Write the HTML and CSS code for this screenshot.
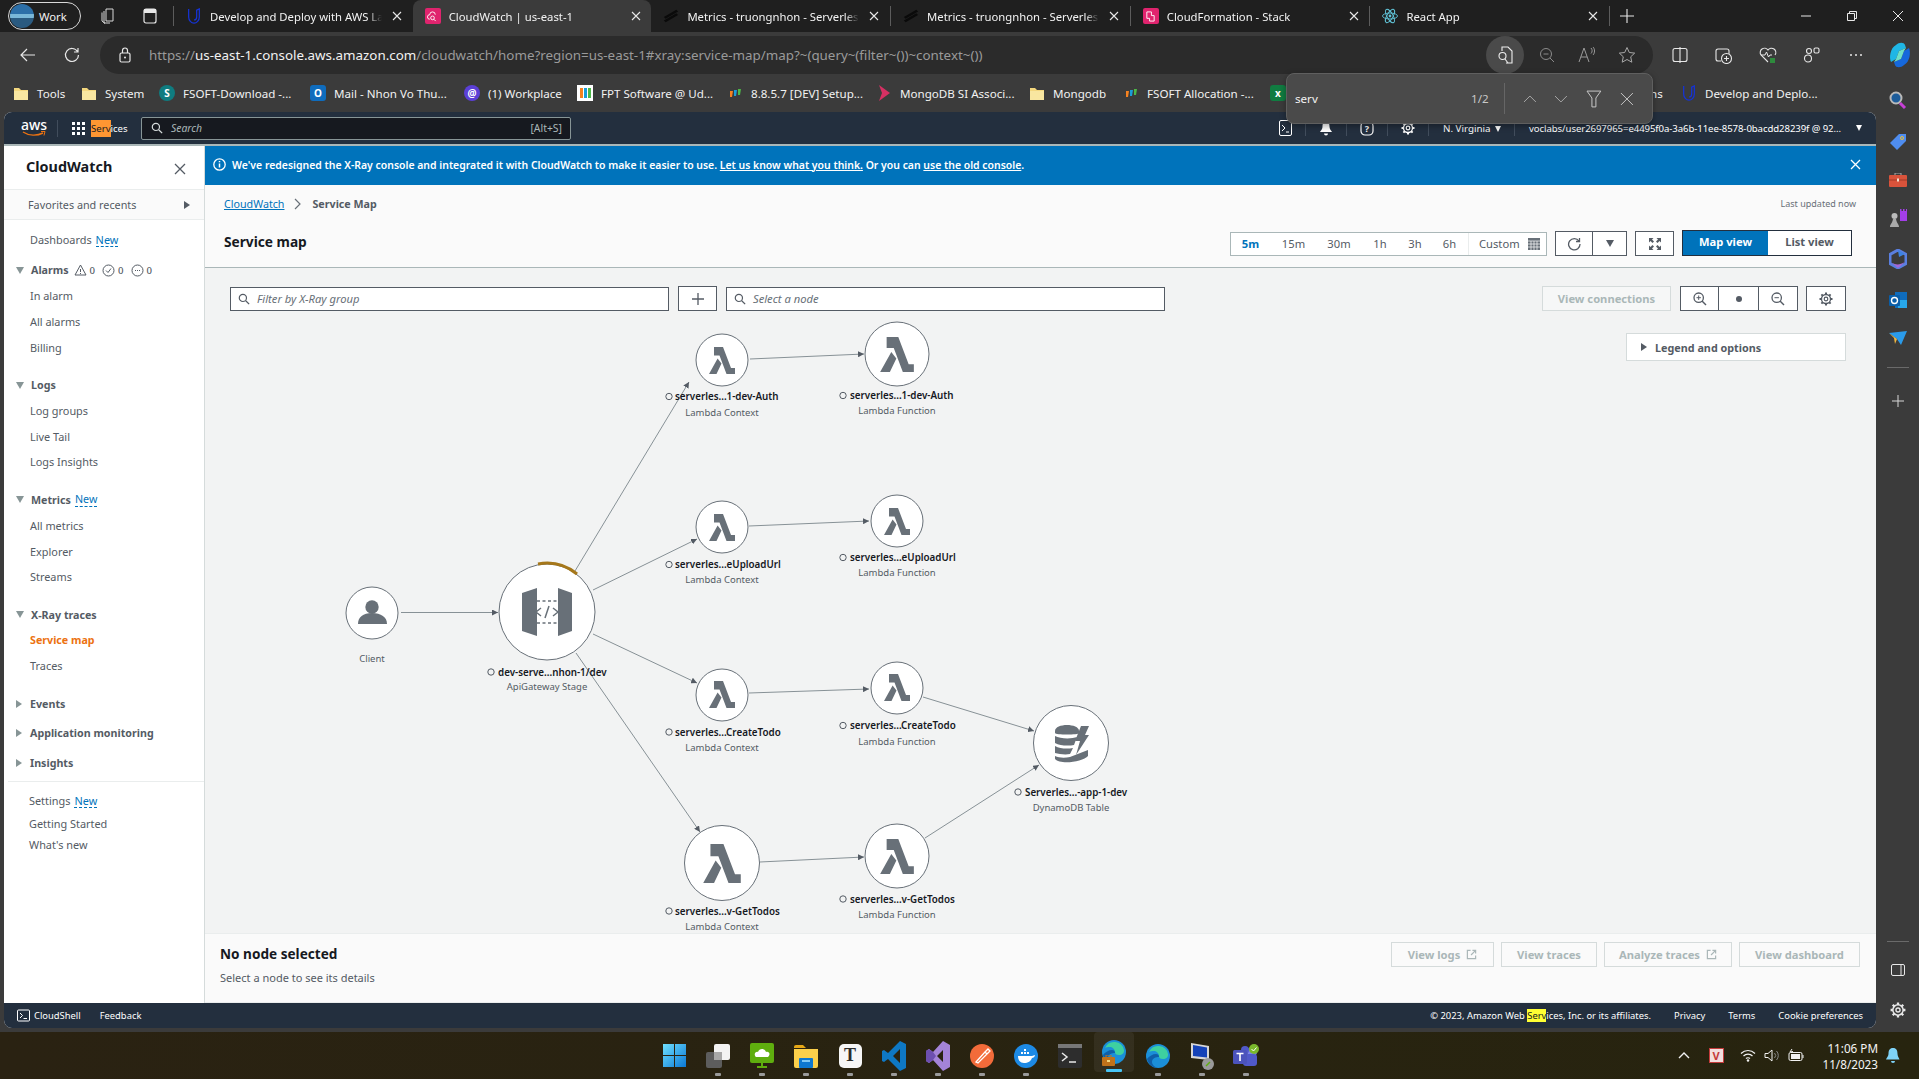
FILE: index.html
```html
<!DOCTYPE html>
<html lang="en">
<head>
<meta charset="utf-8">
<title>CloudWatch | us-east-1</title>
<link rel="stylesheet" href="styles.css">
</head>
<body>
<svg class="defs" width="0" height="0" aria-hidden="true">
  <defs>
    <symbol id="i-x" viewBox="0 0 10 10"><path d="M1 1l8 8M9 1l-8 8" fill="none" stroke="currentColor" stroke-width="1.1"/></symbol>
    <symbol id="i-udacity" viewBox="0 0 16 18"><path d="M2 1v9c0 4 3 7 6 7s6-3 6-7V1l-3 1.5V10c0 2-1 3.5-3 3.5" fill="none" stroke="#1533d6" stroke-width="1.4"/></symbol>
    <symbol id="i-dark" viewBox="0 0 18 16"><path d="M1 9L15 1l2 2L3 11zM1 13L15 5l2 2L3 15z" fill="#0a0a0a"/></symbol>
    <symbol id="i-search" viewBox="0 0 14 14"><circle cx="5.7" cy="5.7" r="4.2" fill="none" stroke="currentColor" stroke-width="1.4"/><path d="M9 9l4 4" stroke="currentColor" stroke-width="1.5"/></symbol>
    <symbol id="i-folder" viewBox="0 0 16 16"><path d="M1 3h5l2 2h7v10H1z" fill="#f3d77e"/><path d="M1 6h14v9H1z" fill="#f8e6a0"/></symbol>
    <symbol id="i-ext" viewBox="0 0 12 12"><path d="M5 1.5H1.5v9h9V7M7 1.5h3.5V5M10.5 1.5L5.5 6.5" fill="none" stroke="currentColor" stroke-width="1.3"/></symbol>
    <symbol id="i-gear" viewBox="0 0 14 14"><path d="M7 .5v13M.5 7h13M2.400 2.400l9.200 9.200M11.600 2.400l-9.200 9.200" stroke="currentColor" stroke-width="2"/><circle cx="7" cy="7" r="4.500" fill="var(--gear-bg)" stroke="currentColor" stroke-width="1.300"/><circle cx="7" cy="7" r="1.800" fill="none" stroke="currentColor" stroke-width="1.200"/></symbol>
    <symbol id="i-lambda" viewBox="0 0 26 27"><path d="M5 0h9l8 21h4v6h-8.5L10.5 8.5H5zM8.6 11.5L0 27h7.5l5-10.5z" fill="#687078"/></symbol>
    <symbol id="i-edge" viewBox="0 0 24 24"><circle cx="12" cy="12" r="12" fill="#1b8fd8"/><path d="M3 8a10 10 0 0 1 19 2c.5 3-2 5-5 5s-4-1-4-3c0-3-3-5-5-5S4 7 3 8z" fill="#3ed0a0"/><path d="M13 13c-3 0-7 1-7 5 0 2 2 5 6 6-5 0-10-4-11-9 2-3 6-5 9-5 2 0 3 1 3 3z" fill="#0f5fa8"/></symbol>
    <marker id="arrow" viewBox="0 0 6 6" refX="6" refY="3" markerWidth="6" markerHeight="6" markerUnits="userSpaceOnUse" orient="auto"><path d="M0 0L6 3L0 6z" fill="#545b64"/></marker>
  </defs>
</svg>

<div class="screen">
  <header class="tabstrip">
    <div class="profile"><span class="avatar"></span><span>Work</span></div>
    <span class="strip-icon"><svg width="16" height="16" viewBox="0 0 16 16"><path d="M6 1h7v12H6zM4 3v12h6M2 4.5V13l3 2.5" fill="none" stroke="#d8d8d8"/></svg></span>
    <span class="strip-icon"><svg width="14" height="16" viewBox="0 0 14 16"><rect x="1" y="1" width="12" height="14" rx="2" fill="none" stroke="#e8e8e8" stroke-width="1.2"/><path d="M1 1h12v4H1z" fill="#e8e8e8"/></svg></span>
    <span class="tab-sep first"></span>
    <div class="tab"><svg class="favicon" viewBox="0 0 16 18"><use href="#i-udacity"/></svg><span class="tab-title">Develop and Deploy with AWS La</span><svg class="tab-x"><use href="#i-x"/></svg></div>
    <div class="tab active"><span class="favicon pink"><svg width="11" height="11" viewBox="0 0 12 12"><path d="M3 9a2.5 2.5 0 0 1 0-5 3 3 0 0 1 6 0M6 5.500a2 2 0 1 1 0 4 2 2 0 0 1 0-4zM7.500 9l2 2" fill="none" stroke="#fff"/></svg></span><span class="tab-title">CloudWatch | us-east-1</span><svg class="tab-x"><use href="#i-x"/></svg></div>
    <div class="tab"><svg class="favicon" viewBox="0 0 18 16"><use href="#i-dark"/></svg><span class="tab-title">Metrics - truongnhon - Serverles</span><svg class="tab-x"><use href="#i-x"/></svg></div>
    <span class="tab-sep"></span>
    <div class="tab"><svg class="favicon" viewBox="0 0 18 16"><use href="#i-dark"/></svg><span class="tab-title">Metrics - truongnhon - Serverles</span><svg class="tab-x"><use href="#i-x"/></svg></div>
    <span class="tab-sep"></span>
    <div class="tab"><span class="favicon pink"><svg width="11" height="11" viewBox="0 0 12 12"><path d="M2 1h5v4h3v6H5V8H2z" fill="none" stroke="#fff"/></svg></span><span class="tab-title">CloudFormation - Stack</span><svg class="tab-x"><use href="#i-x"/></svg></div>
    <span class="tab-sep"></span>
    <div class="tab"><svg class="favicon" viewBox="0 0 16 16"><g fill="none" stroke="#61c4d8" stroke-width=".9"><ellipse cx="8" cy="8" rx="7.500" ry="3"/><ellipse cx="8" cy="8" rx="7.500" ry="3" transform="rotate(60 8 8)"/><ellipse cx="8" cy="8" rx="7.500" ry="3" transform="rotate(120 8 8)"/></g><circle cx="8" cy="8" r="1.400" fill="#61c4d8"/></svg><span class="tab-title">React App</span><svg class="tab-x"><use href="#i-x"/></svg></div>
    <span class="tab-sep"></span>
    <svg class="new-tab" viewBox="0 0 14 14"><path d="M7 0v14M0 7h14" stroke="#e8e8e8" stroke-width="1.100"/></svg>
    <div class="win-controls">
      <svg viewBox="0 0 10 10"><path d="M0 5h10" stroke="#e8e8e8"/></svg>
      <svg viewBox="0 0 10 10"><path d="M.5 2.500h7v7h-7zM2.500 2.500V.5h7v7H7.500" fill="none" stroke="#e8e8e8"/></svg>
      <svg viewBox="0 0 10 10"><path d="M0 0l10 10M10 0L0 10" stroke="#e8e8e8"/></svg>
    </div>
  </header>

  <div class="toolbar">
    <span class="tool"><svg width="16" height="14" viewBox="0 0 16 14"><path d="M15 7H1M7 1L1 7l6 6" fill="none" stroke="#e8e8e8" stroke-width="1.200"/></svg></span>
    <span class="tool"><svg width="16" height="16" viewBox="0 0 16 16"><path d="M13.500 4.500A6.500 6.500 0 1 0 14.500 8M14 1v4h-4" fill="none" stroke="#e8e8e8" stroke-width="1.200"/></svg></span>
    <div class="address">
      <svg class="lock" width="12" height="16" viewBox="0 0 12 16"><rect x="1" y="6" width="10" height="9" rx="1.500" fill="none" stroke="#e8e8e8" stroke-width="1.200"/><path d="M3.500 6V3.500a2.500 2.500 0 0 1 5 0V6" fill="none" stroke="#e8e8e8" stroke-width="1.200"/><circle cx="6" cy="10.500" r="1" fill="#e8e8e8"/></svg>
      <span class="url"><span class="url-dim">https://</span>us-east-1.console.aws.amazon.com<span class="url-dim">/cloudwatch/home?region=us-east-1#xray:service-map/map?~(query~(filter~())~context~())</span></span>
      <div class="address-end">
        <span class="addr-btn on"><svg width="16" height="18" viewBox="0 0 16 18"><path d="M5 5V1h6l4 4v12H9" fill="none" stroke="#eee" stroke-width="1.100"/><circle cx="5.500" cy="10" r="3.500" fill="none" stroke="#eee" stroke-width="1.100"/><path d="M8 13l3 4" stroke="#eee" stroke-width="1.100"/></svg></span>
        <span class="addr-btn"><svg width="16" height="16" viewBox="0 0 16 16"><circle cx="7" cy="7" r="5.500" fill="none" stroke="#8b8b8b"/><path d="M4.500 7h5M11 11l4 4" stroke="#8b8b8b"/></svg></span>
        <span class="addr-btn"><svg width="18" height="16" viewBox="0 0 18 16"><path d="M1 15L6 1l5 14M3 10h6M13 1c1.500 1.500 1.500 4 0 5.500M15 0c2 2 2 6 0 8" fill="none" stroke="#9a9a9a"/></svg></span>
        <span class="addr-btn"><svg width="18" height="18" viewBox="0 0 18 18"><path d="M9 1.500l2.300 5 5.400.6-4 3.700 1.100 5.400L9 13.500l-4.800 2.700 1.100-5.400-4-3.700 5.400-.6z" fill="none" stroke="#a8a8a8"/></svg></span>
      </div>
    </div>
    <span class="tool first-end"><svg width="16" height="16" viewBox="0 0 16 16"><rect x="1" y="1.500" width="14" height="13" rx="2" fill="none" stroke="#e8e8e8" stroke-width="1.100"/><path d="M8 0v16" stroke="#e8e8e8" stroke-width="1.100"/></svg></span>
    <span class="tool"><svg width="18" height="18" viewBox="0 0 18 18"><path d="M3 3h9a2 2 0 0 1 2 2v3M3 3a2 2 0 0 0-2 2v8a2 2 0 0 0 2 2h3" fill="none" stroke="#e8e8e8" stroke-width="1.100"/><circle cx="11.500" cy="12.500" r="5" fill="none" stroke="#e8e8e8" stroke-width="1.100"/><path d="M11.500 10v5M9 12.500h5" stroke="#e8e8e8" stroke-width="1.100"/></svg></span>
    <span class="tool"><svg width="18" height="18" viewBox="0 0 18 18"><path d="M9 16L2 9a4 4 0 0 1 7-5 4 4 0 0 1 7 5" fill="none" stroke="#e8e8e8" stroke-width="1.100"/><path d="M2 9h4l1.500-3 2 5 1.500-2h2" fill="none" stroke="#e8e8e8"/><rect x="11" y="12" width="5" height="5" fill="#2e8b3d"/></svg></span>
    <span class="tool"><svg width="18" height="18" viewBox="0 0 18 18"><circle cx="5" cy="12.500" r="3.500" fill="none" stroke="#e8e8e8" stroke-width="1.100"/><circle cx="6" cy="5" r="2.500" fill="none" stroke="#e8e8e8" stroke-width="1.100"/><rect x="11" y="2" width="5" height="5" rx="1.500" fill="none" stroke="#e8e8e8" stroke-width="1.100"/></svg></span>
    <span class="tool"><svg width="14" height="4" viewBox="0 0 14 4"><circle cx="2" cy="2" r="1" fill="#e8e8e8"/><circle cx="7" cy="2" r="1" fill="#e8e8e8"/><circle cx="12" cy="2" r="1" fill="#e8e8e8"/></svg></span>
    <span class="tool"><svg width="24" height="26" viewBox="0 0 24 26"><path d="M8 3c3-3 8-3 9 0l1 3-7 3-3 8-5 3C1 16 2 6 8 3z" fill="#1fb6e6"/><path d="M16 23c-3 3-8 3-9 0l-1-3 7-3 3-8 5-3c2 4 1 14-5 17z" fill="#1668dc"/><path d="M11 9l7-3-2 3-3 8-7 3 2-3z" fill="#6fe0c8"/></svg></span>
  </div>

  <nav class="bookmarks">
    <a class="bm"><svg class="bm-icon"><use href="#i-folder"/></svg>Tools</a>
    <a class="bm"><svg class="bm-icon"><use href="#i-folder"/></svg>System</a>
    <a class="bm"><span class="bm-icon letter teal">S</span>FSOFT-Download -...</a>
    <a class="bm"><span class="bm-icon letter blue">O</span>Mail - Nhon Vo Thu...</a>
    <a class="bm"><span class="bm-icon letter violet">@</span>(1) Workplace</a>
    <a class="bm"><svg class="bm-icon" viewBox="0 0 16 16"><rect width="16" height="16" fill="#fff"/><path d="M3 3h3v10H3z" fill="#f58220"/><path d="M7 3h3v10H7z" fill="#1a9dd9"/><path d="M11 3h3v10h-3z" fill="#4db848"/></svg>FPT Software @ Ud...</a>
    <a class="bm"><svg class="bm-icon" viewBox="0 0 16 16"><path d="M3 6h3l-1 6H3z" fill="#f58220"/><path d="M7 5h3l-1 6H7z" fill="#1a9dd9"/><path d="M11 4h3l-1 6h-2z" fill="#4db848"/></svg>8.8.5.7 [DEV] Setup...</a>
    <a class="bm"><svg class="bm-icon" viewBox="0 0 16 16"><path d="M3 0l11 8-11 8 3-8z" fill="#d63063"/></svg>MongoDB SI Associ...</a>
    <a class="bm"><svg class="bm-icon"><use href="#i-folder"/></svg>Mongodb</a>
    <a class="bm"><svg class="bm-icon" viewBox="0 0 16 16"><path d="M3 6h3l-1 6H3z" fill="#f58220"/><path d="M7 5h3l-1 6H7z" fill="#1a9dd9"/><path d="M11 4h3l-1 6h-2z" fill="#4db848"/></svg>FSOFT Allocation -...</a>
    <a class="bm"><span class="bm-icon letter green">x</span></a>
    <a class="bm">ns</a>
    <a class="bm"><svg class="bm-icon" viewBox="0 0 16 18"><use href="#i-udacity"/></svg>Develop and Deplo...</a>
  </nav>

  <div class="find">
    <span class="find-text">serv</span>
    <span class="find-count">1/2</span>
    <span class="find-sep"></span>
    <svg width="14" height="8" viewBox="0 0 14 8"><path d="M1 7l6-6 6 6" fill="none" stroke="#a8a8a8"/></svg>
    <svg width="14" height="8" viewBox="0 0 14 8"><path d="M1 1l6 6 6-6" fill="none" stroke="#a8a8a8"/></svg>
    <svg width="16" height="18" viewBox="0 0 16 18"><path d="M1 1h14L10 8v9H6V8z" fill="none" stroke="#c8c8c8"/></svg>
    <svg width="14" height="14" viewBox="0 0 14 14"><path d="M1 1l12 12M13 1L1 13" stroke="#c8c8c8"/></svg>
  </div>

  <div class="workspace">
    <div class="console">
      <div class="topnav">
        <div class="aws-logo"><span>aws</span><svg width="24" height="6" viewBox="0 0 24 6"><path d="M1 1c6 4 14 4 20 1" fill="none" stroke="#ec7211" stroke-width="1.400"/><path d="M19 .5h4l-1 4" fill="none" stroke="#ec7211"/></svg></div>
        <span class="nav-rule"></span>
        <svg class="grid-icon" width="13" height="13" viewBox="0 0 13 13"><g fill="#fff"><rect width="3" height="3"/><rect x="5" width="3" height="3"/><rect x="10" width="3" height="3"/><rect y="5" width="3" height="3"/><rect x="5" y="5" width="3" height="3"/><rect x="10" y="5" width="3" height="3"/><rect y="10" width="3" height="3"/><rect x="5" y="10" width="3" height="3"/><rect x="10" y="10" width="3" height="3"/></g></svg>
        <span class="services"><mark class="hit-current">Serv</mark>ices</span>
        <div class="global-search"><svg class="search-glass" width="12" height="12"><use href="#i-search"/></svg><span class="search-ph">Search</span><span class="search-key">[Alt+S]</span></div>
        <div class="topnav-right">
          <span class="top-ico"><svg width="13" height="16" viewBox="0 0 13 16"><rect x=".5" y=".5" width="12" height="15" rx="1.500" fill="none" stroke="#fff"/><path d="M3 5l3 3-3 3M7 12h3" fill="none" stroke="#fff"/></svg></span>
          <span class="top-ico"><svg width="14" height="15" viewBox="0 0 14 15"><path d="M7 1c3 0 3.500 2 3.500 5 0 2 2 4 2.500 5H1c.5-1 2.500-3 2.500-5C3.500 3 4 1 7 1zM5 12.500a2 2 0 0 0 4 0" fill="#fff"/></svg></span>
          <span class="top-ico"><svg width="14" height="15" viewBox="0 0 14 15"><rect x="1" y="1" width="12" height="13" rx="4" fill="none" stroke="#fff" stroke-width="1.200"/><text x="7" y="11" class="q-mark">?</text></svg></span>
          <span class="top-ico dark-gear"><svg width="14" height="14"><use href="#i-gear"/></svg></span>
          <span class="region">N. Virginia <i class="caret"></i></span>
          <span class="account">voclabs/user2697965=e4495f0a-3a6b-11ee-8578-0bacdd28239f @ 92...</span>
          <i class="caret end"></i>
        </div>
      </div>

      <div class="console-body">
        <aside class="sidenav">
          <div class="side-head"><h2>CloudWatch</h2><svg class="side-x" width="12" height="12" viewBox="0 0 12 12"><path d="M1 1l10 10M11 1L1 11" stroke="#545b64" stroke-width="1.300"/></svg></div>
          <div class="favorites"><span>Favorites and recents</span><i class="tri-right dark"></i></div>
          <ul class="side-list">
            <li class="item first">Dashboards <span class="new">New</span></li>
            <li class="head alarms"><i class="tri-down"></i>Alarms
              <span class="alarm-badges">
                <svg width="13" height="12" viewBox="0 0 13 12"><path d="M6.500 1L12 11H1z" fill="none" stroke="#545b64"/><path d="M6.500 5v3M6.500 9v1" stroke="#545b64"/></svg><b>0</b>
                <svg width="13" height="13" viewBox="0 0 13 13"><circle cx="6.500" cy="6.500" r="5.500" fill="none" stroke="#545b64"/><path d="M4 6.500l2 2 3-4" fill="none" stroke="#545b64"/></svg><b>0</b>
                <svg width="13" height="13" viewBox="0 0 13 13"><circle cx="6.500" cy="6.500" r="5.500" fill="none" stroke="#545b64"/><path d="M4 6.500h1M6 6.500h1M8 6.500h1" stroke="#545b64"/></svg><b>0</b>
              </span></li>
            <li class="item">In alarm</li>
            <li class="item">All alarms</li>
            <li class="item">Billing</li>
            <li class="head group"><i class="tri-down"></i>Logs</li>
            <li class="item">Log groups</li>
            <li class="item">Live Tail</li>
            <li class="item">Logs Insights</li>
            <li class="head group"><i class="tri-down"></i>Metrics <span class="new">New</span></li>
            <li class="item">All metrics</li>
            <li class="item">Explorer</li>
            <li class="item">Streams</li>
            <li class="head group"><i class="tri-down"></i>X-Ray traces</li>
            <li class="item current">Service map</li>
            <li class="item">Traces</li>
            <li class="head group"><i class="tri-right"></i>Events</li>
            <li class="head tight"><i class="tri-right"></i>Application monitoring</li>
            <li class="head tight"><i class="tri-right"></i>Insights</li>
          </ul>
          <ul class="side-foot">
            <li>Settings <span class="new">New</span></li>
            <li>Getting Started</li>
            <li>What's new</li>
          </ul>
        </aside>

        <main class="main">
          <div class="banner">
            <svg class="banner-icon" width="13" height="13" viewBox="0 0 13 13"><circle cx="6.500" cy="6.500" r="5.700" fill="none" stroke="#fff" stroke-width="1.300"/><path d="M6.500 5.500v4M6.500 3v1.300" stroke="#fff" stroke-width="1.500"/></svg>
            <p>We've redesigned the X-Ray console and integrated it with CloudWatch to make it easier to use. <a>Let us know what you think.</a> Or you can <a>use the old console</a>.</p>
            <svg class="banner-x" width="11" height="11" viewBox="0 0 11 11"><path d="M1 1l9 9M10 1l-9 9" stroke="#fff" stroke-width="1.300"/></svg>
          </div>

          <div class="page-head">
            <div class="crumbs">
              <a>CloudWatch</a>
              <svg width="8" height="12" viewBox="0 0 8 12"><path d="M1 1l5 5-5 5" fill="none" stroke="#687078" stroke-width="1.200"/></svg>
              <b>Service Map</b>
              <span class="updated">Last updated now</span>
            </div>
            <div class="title-row">
              <h1>Service map</h1>
              <div class="range">
                <span class="range-opt on">5m</span><span class="range-opt w15">15m</span><span class="range-opt w30">30m</span><span class="range-opt w1">1h</span><span class="range-opt w3">3h</span><span class="range-opt w6">6h</span>
                <span class="range-custom">Custom<svg width="12" height="12" viewBox="0 0 12 12"><rect width="12" height="12" fill="#687078"/><path d="M0 3h12M0 6h12M0 9h12M3 3v9M6 3v9M9 3v9" stroke="#fff" stroke-width=".7"/></svg></span>
              </div>
              <div class="btn-group">
                <span class="sq w38"><svg width="14" height="14" viewBox="0 0 14 14"><path d="M12 4a5.700 5.700 0 1 0 1 3M12.500 1v3.500H9" fill="none" stroke="#545b64" stroke-width="1.300"/></svg></span>
                <span class="sq w34"><i class="tri-down dark"></i></span>
              </div>
              <span class="sq single w39"><svg width="12" height="12" viewBox="0 0 12 12"><path d="M0 0h4.500L3 1.500 5 3.500 3.500 5l-2-2L0 4.500zM12 0v4.500L10.500 3l-2 2L7 3.500l2-2L7.500 0zM0 12V7.500L1.500 9l2-2L5 8.500l-2 2L4.500 12zM12 12H7.500L9 10.500l-2-2L8.500 7l2 2L12 7.500z" fill="#545b64"/></svg></span>
              <div class="view-switch"><span class="view-on">Map view</span><span class="view-off">List view</span></div>
            </div>
          </div>

          <section class="map">
            <svg class="map-canvas" viewBox="205 268 1671 665">
              <g class="edges">
                <path d="M401 612.500H498"/><path d="M575 571L689 382"/><path d="M593 590L697 539"/><path d="M593 634L697 683"/><path d="M576 653L700 832"/>
                <path d="M750 359L864 354"/><path d="M749 526L869 521"/><path d="M749 693L869 689"/><path d="M760 862L864 857"/>
                <path d="M923 697L1034 731"/><path d="M925 838L1039 765"/>
              </g>
              <g class="nodes">
                <circle cx="372" cy="613" r="26"/><circle cx="547" cy="612" r="48"/>
                <circle cx="722" cy="360" r="26"/><circle cx="897" cy="354" r="32"/>
                <circle cx="722" cy="527" r="26"/><circle cx="897" cy="521" r="26"/>
                <circle cx="722" cy="695" r="26"/><circle cx="897" cy="688" r="26"/>
                <circle cx="722" cy="863" r="37.500"/><circle cx="897" cy="856" r="32"/>
                <circle cx="1071" cy="743" r="37.500"/>
              </g>
              <path class="health-arc" d="M538 564A48 48 0 0 1 577 574"/>

              <circle class="glyph-fill" cx="372" cy="607" r="6.700"/>
              <path class="glyph-fill" d="M358 624c0-7 5-11 14-11s15 4 15 11z"/>

              <path class="glyph-fill" d="M522 593l15-5v48l-15-5zM558 588l14 5v38l-14 5z"/>
              <path class="gw-dash" d="M537 601H558M537 623H558"/>
              <path class="gw-code" d="M541 608l-5 4 5 4M553 608l5 4-5 4M549 606l-4 12"/>

              <use href="#i-lambda" x="709" y="347" width="26" height="27"/>
              <use href="#i-lambda" x="880" y="337" width="34" height="35"/>
              <use href="#i-lambda" x="709" y="514" width="26" height="27"/>
              <use href="#i-lambda" x="884" y="508" width="26" height="27"/>
              <use href="#i-lambda" x="709" y="681" width="26" height="27"/>
              <use href="#i-lambda" x="884" y="674" width="26" height="27"/>
              <use href="#i-lambda" x="703" y="844" width="38" height="39"/>
              <use href="#i-lambda" x="880" y="839" width="34" height="35"/>

              <g class="ddb">
                <path class="glyph-fill" d="M1055 731c0-8 24-8 24-0v2c0 2-24 2-24 0z"/>
                <path class="glyph-fill" d="M1055 736c5 3 17 3 22 1l-3 8c-5 1-14 1-19-2z"/>
                <path class="glyph-fill" d="M1055 746c5 3 13 3 18 2l-3 6c-5 1-11 0-15-1z"/>
                <path class="glyph-fill" d="M1055 756c4 2 10 2 15 1l18-7v6c-5 6-28 9-33 3z"/>
                <path class="glyph-fill" d="M1081 726h8l-4 9h4l-13 20 4-14h-5z"/>
              </g>

              <g class="labels">
                <text class="type" x="372" y="662">Client</text>

                <circle class="status" cx="491" cy="672" r="3.200"/><text class="name" x="498" y="675.500">dev-serve...nhon-1/dev</text><text class="type" x="547" y="690">ApiGateway Stage</text>

                <circle class="status" cx="669" cy="396.500" r="3.200"/><text class="name" x="675" y="400">serverles...1-dev-Auth</text><text class="type" x="722" y="416">Lambda Context</text>
                <circle class="status" cx="843" cy="395.500" r="3.200"/><text class="name" x="850" y="399">serverles...1-dev-Auth</text><text class="type" x="897" y="414">Lambda Function</text>

                <circle class="status" cx="669" cy="564.500" r="3.200"/><text class="name" x="675" y="568">serverles...eUploadUrl</text><text class="type" x="722" y="583">Lambda Context</text>
                <circle class="status" cx="843" cy="557.500" r="3.200"/><text class="name" x="850" y="561">serverles...eUploadUrl</text><text class="type" x="897" y="576">Lambda Function</text>

                <circle class="status" cx="669" cy="732" r="3.200"/><text class="name" x="675" y="735.500">serverles...CreateTodo</text><text class="type" x="722" y="751">Lambda Context</text>
                <circle class="status" cx="843" cy="725.500" r="3.200"/><text class="name" x="850" y="729">serverles...CreateTodo</text><text class="type" x="897" y="744.500">Lambda Function</text>

                <circle class="status" cx="669" cy="911" r="3.200"/><text class="name" x="675" y="914.500">serverles...v-GetTodos</text><text class="type" x="722" y="930">Lambda Context</text>
                <circle class="status" cx="843" cy="899" r="3.200"/><text class="name" x="850" y="902.500">serverles...v-GetTodos</text><text class="type" x="897" y="918">Lambda Function</text>

                <circle class="status" cx="1018" cy="792" r="3.200"/><text class="name" x="1025" y="795.500">Serverles...-app-1-dev</text><text class="type" x="1071" y="811">DynamoDB Table</text>
              </g>
            </svg>

            <div class="map-tools">
              <div class="field"><svg width="12" height="12"><use href="#i-search"/></svg><span>Filter by X-Ray group</span></div>
              <span class="sq single plus"><svg width="12" height="12" viewBox="0 0 12 12"><path d="M6 0v12M0 6h12" stroke="#545b64" stroke-width="1.300"/></svg></span>
              <div class="field"><svg width="12" height="12"><use href="#i-search"/></svg><span>Select a node</span></div>
              <span class="ghost-btn conn">View connections</span>
              <div class="btn-group zoomers">
                <span class="sq"><svg width="14" height="14" viewBox="0 0 14 14"><circle cx="5.700" cy="5.700" r="4.700" fill="none" stroke="#545b64" stroke-width="1.300"/><path d="M9 9l4 4" stroke="#545b64" stroke-width="1.500"/><path d="M5.700 3.500v4.400M3.500 5.700h4.400" stroke="#545b64"/></svg></span>
                <span class="sq"><i class="dot"></i></span>
                <span class="sq"><svg width="14" height="14" viewBox="0 0 14 14"><circle cx="5.700" cy="5.700" r="4.700" fill="none" stroke="#545b64" stroke-width="1.300"/><path d="M9 9l4 4" stroke="#545b64" stroke-width="1.500"/><path d="M3.500 5.700h4.400" stroke="#545b64"/></svg></span>
              </div>
              <span class="sq single gear"><svg width="14" height="14"><use href="#i-gear"/></svg></span>
            </div>
            <div class="legend"><i class="tri-right dark"></i>Legend and options</div>
          </section>

          <div class="details">
            <div class="details-text"><h3>No node selected</h3><p>Select a node to see its details</p></div>
            <div class="details-actions">
              <span class="ghost-btn">View logs<svg width="11" height="11"><use href="#i-ext"/></svg></span>
              <span class="ghost-btn">View traces</span>
              <span class="ghost-btn">Analyze traces<svg width="11" height="11"><use href="#i-ext"/></svg></span>
              <span class="ghost-btn">View dashboard</span>
            </div>
          </div>
        </main>
      </div>

      <footer class="console-foot">
        <svg width="13" height="13" viewBox="0 0 13 13"><rect x=".5" y="1" width="12" height="11" rx="1" fill="none" stroke="#fff"/><path d="M3 4l2.500 2.500L3 9M6.500 9.500h3.500" fill="none" stroke="#fff"/></svg>
        <span class="cs">CloudShell</span>
        <span>Feedback</span>
        <div class="foot-right">
          <span class="copy">© 2023, Amazon Web <mark class="hit">Serv</mark>ices, Inc. or its affiliates.</span>
          <span>Privacy</span>
          <span>Terms</span>
          <span>Cookie preferences</span>
        </div>
      </footer>
    </div>

    <aside class="edgebar">
      <svg width="18" height="20" viewBox="0 0 18 20"><circle cx="7" cy="7" r="5.500" fill="#1d5c9a" stroke="#b9b9b9" stroke-width="2"/><path d="M11 12l5 5" stroke="#c73fd6" stroke-width="3"/></svg>
      <svg width="18" height="18" viewBox="0 0 18 18"><path d="M1 10L10 1h7v7l-9 9z" fill="#4f8df0"/><circle cx="13" cy="5" r="1.500" fill="none" stroke="#f2c230"/></svg>
      <svg width="18" height="14" viewBox="0 0 18 14"><path d="M6 2V0h6v2" fill="none" stroke="#aaa"/><rect y="2" width="18" height="12" rx="1" fill="#d9533b"/><path d="M0 7h18" stroke="#a13a28"/><rect x="8" y="5.500" width="2" height="3" fill="#f2e2d0"/></svg>
      <svg width="18" height="18" viewBox="0 0 18 18"><path d="M11 0h1.500v2H14V0h1.500v2H17V0h1v12h-7z" fill="#a23ee8"/><circle cx="5.500" cy="7" r="3" fill="#bbb"/><path d="M3 18h-2c0-3 2-3 3-8h3c1 5 3 5 3 8z" fill="#aaa"/></svg>
      <svg width="18" height="20" viewBox="0 0 18 20"><path d="M9 1l8 4.500v9L9 19l-8-4.500v-9z" fill="none" stroke="#5a7fe0" stroke-width="3"/><path d="M3 14c4 2 8 2 13-1l-7 6z" fill="#a468d8"/><path d="M9 1l7 4-6 3z" fill="#3e82e0"/></svg>
      <svg width="18" height="18" viewBox="0 0 18 18"><rect x="6" y="1" width="12" height="16" fill="#0f6cbd"/><rect x="9" y="9" width="9" height="8" fill="#28a8ea"/><rect y="4" width="11" height="11" rx="1" fill="#0a5ea8"/><circle cx="5.500" cy="9.500" r="3" fill="none" stroke="#fff" stroke-width="1.400"/></svg>
      <svg width="18" height="14" viewBox="0 0 18 14"><path d="M0 2l18-2-6 14-4-6z" fill="#2a9bea"/><path d="M0 2l8 6-2 5-1-6z" fill="#f0b640"/></svg>
      <span class="edge-rule"></span>
      <svg width="12" height="12" viewBox="0 0 12 12"><path d="M6 0v12M0 6h12" stroke="#d8d8d8"/></svg>
      <span class="edge-rule low"></span>
      <svg class="edge-panel" width="14" height="12" viewBox="0 0 14 12"><rect x=".5" y=".5" width="13" height="11" rx="1.500" fill="none" stroke="#e8e8e8"/><path d="M10 .5v11" stroke="#e8e8e8"/></svg>
      <svg class="edge-gear" width="16" height="16"><use href="#i-gear"/></svg>
    </aside>
  </div>

  <footer class="taskbar">
    <div class="task-icons">
      <span class="task"><svg width="23" height="23" viewBox="0 0 23 23"><defs><linearGradient id="win" x1="0" y1="0" x2="1" y2="1"><stop offset="0" stop-color="#6fe0ff"/><stop offset="1" stop-color="#0a78d6"/></linearGradient></defs><path d="M0 0h11v11H0zM12 0h11v11H12zM0 12h11v11H0zM12 12h11v11H12z" fill="url(#win)"/></svg></span>
      <span class="task"><svg width="24" height="24" viewBox="0 0 24 24"><rect y="8" width="16" height="16" rx="2" fill="#5d5d5d"/><rect x="8" width="16" height="16" rx="2" fill="#f3f3f3"/><rect x="8" y="8" width="8" height="8" fill="#a8a8a8"/></svg><i class="pip"></i></span>
      <span class="task"><svg width="24" height="26" viewBox="0 0 24 26"><rect width="24" height="20" rx="2" fill="#5fae0e"/><path d="M6 14c-3-3 0-6 2-5 1-4 7-4 8 0 3-1 5 2 2 5z" fill="#fff"/><path d="M11 20h2v3h4v2H7v-2h4z" fill="#5fae0e"/></svg><i class="pip"></i></span>
      <span class="task"><svg width="24" height="24" viewBox="0 0 24 24"><path d="M0 3a2 2 0 0 1 2-2h7l3 3H0z" fill="#e6a817"/><path d="M0 5h24v17a2 2 0 0 1-2 2H2a2 2 0 0 1-2-2z" fill="#fcd04b"/><rect x="5" y="14" width="14" height="10" rx="1" fill="#0e78d0"/><rect x="8" y="16" width="8" height="2" fill="#7ec8f5"/></svg><i class="pip"></i></span>
      <span class="task"><span class="type-t">T</span><i class="pip"></i></span>
      <span class="task"><svg width="24" height="30" viewBox="0 0 24 30"><path d="M18 0l6 3v24l-6 3L6 18l-4 3-2-1v-10l2-1 4 3zM18 8l-7 7 7 7z" fill="#0e78c4"/></svg><i class="pip"></i></span>
      <span class="task"><svg width="24" height="30" viewBox="0 0 24 30"><path d="M17 0l7 4v22l-7 4L7 19l-4 3-3-2V10l3-2 4 3zM17 9l-6 6 6 6z" fill="#a484d8"/><path d="M0 10l3-2 4 3 3 4-3 4-4 3-3-2z" fill="#6d4fb0"/></svg><i class="pip"></i></span>
      <span class="task"><svg width="24" height="24" viewBox="0 0 24 24"><circle cx="12" cy="12" r="12" fill="#f26b3a"/><path d="M6 18l9-10 2 2-9 9zM15 8l3-3 2 2-3 3" fill="none" stroke="#fff" stroke-width="1.300"/></svg><i class="pip"></i></span>
      <span class="task"><svg width="24" height="24" viewBox="0 0 24 24"><circle cx="12" cy="12" r="12" fill="#1d8ae5"/><path d="M4 12h14c1 0 2-1 3-1 0 2-2 3-3 3-1 3-4 5-8 5-4 0-6-3-6-7z" fill="#fff"/><path d="M7 8h2v2H7zM10 8h2v2h-2zM13 8h2v2h-2zM10 5h2v2h-2z" fill="#fff"/></svg><i class="pip"></i></span>
      <span class="task"><svg width="24" height="24" viewBox="0 0 24 24"><rect width="24" height="24" rx="2" fill="#2d2d2d"/><rect width="24" height="4" fill="#777"/><path d="M4 9l5 4-5 4M11 18h7" fill="none" stroke="#e8e8e8" stroke-width="1.500"/></svg></span>
      <span class="task active"><svg width="24" height="24"><use href="#i-edge"/></svg><svg class="briefcase" width="13" height="11" viewBox="0 0 13 11"><rect y="2" width="13" height="9" rx="1" fill="#c0721a"/><path d="M4 2V0h5v2" fill="none" stroke="#c0721a"/><rect x="5" y="5" width="3" height="2" fill="#f3d77e"/></svg><i class="pip blue"></i></span>
      <span class="task"><svg width="24" height="24"><use href="#i-edge"/></svg><i class="pip"></i></span>
      <span class="task"><svg width="24" height="28" viewBox="0 0 24 28"><path d="M1 1l18 3v14L1 16z" fill="#d6d6d6"/><path d="M3 3l14 2.500v10L3 14z" fill="#1442b8"/><circle cx="18" cy="22" r="6" fill="#9a9a9a"/><path d="M16 24l4-4" stroke="#5fae0e" stroke-width="1.500"/></svg><i class="pip"></i></span>
      <span class="task"><svg width="26" height="24" viewBox="0 0 26 24"><circle cx="19" cy="8" r="5" fill="#7b83eb"/><circle cx="12" cy="6" r="4" fill="#5059c9"/><rect x="10" y="10" width="14" height="12" rx="3" fill="#5059c9"/><rect y="6" width="14" height="14" rx="1.500" fill="#4b53bc"/><path d="M3.500 9.500h7M7 9.500V17" stroke="#fff" stroke-width="1.600"/><circle cx="21" cy="5" r="5" fill="#7ab82c"/><path d="M18.500 5l2 2 3-3.500" fill="none" stroke="#fff"/></svg><i class="pip"></i></span>
    </div>
    <div class="tray">
      <svg width="12" height="7" viewBox="0 0 12 7"><path d="M1 6l5-5 5 5" fill="none" stroke="#f2f2f2" stroke-width="1.400"/></svg>
      <span class="tray-v">V</span>
      <svg width="16" height="13" viewBox="0 0 16 13"><path d="M1 4.500c4-4 10-4 14 0M3.500 7c2.500-2.500 6.500-2.500 9 0M6 9.500c1-1 3-1 4 0" fill="none" stroke="#f2f2f2" stroke-width="1.200"/><circle cx="8" cy="11.500" r="1.200" fill="#f2f2f2"/></svg>
      <svg width="16" height="13" viewBox="0 0 16 13"><path d="M1 4.500h3L8 1v11L4 8.500H1z" fill="none" stroke="#f2f2f2"/><path d="M10.500 4a3.500 3.500 0 0 1 0 5M12.500 2a6.500 6.500 0 0 1 0 9" fill="none" stroke="#888"/></svg>
      <svg width="17" height="13" viewBox="0 0 17 13"><rect x="1" y="3.500" width="13" height="8" rx="1.500" fill="none" stroke="#f2f2f2"/><rect x="3" y="5" width="9" height="5" fill="#f2f2f2"/><path d="M15 6v3" stroke="#f2f2f2"/><path d="M4 0l-2 3 3-.5" fill="none" stroke="#f2f2f2"/></svg>
      <div class="clock"><span>11:06 PM</span><span>11/8/2023</span></div>
      <svg class="tray-bell" width="14" height="15" viewBox="0 0 14 15"><path d="M7 0c3.500 0 4.500 2.500 4.500 6 0 2 1.500 4 2 5.500H0C.5 10 2.500 8 2.500 6 2.500 2.500 3.500 0 7 0zM5 13h4a2 2 0 0 1-4 0z" fill="#7fd3f7"/></svg>
    </div>
  </footer>
</div>
</body>
</html>
```

FILE: styles.css
```css
* { box-sizing: border-box; }
html, body { margin: 0; padding: 0; }
body { background: #3b3b3b; font-family: "Noto Sans", "Open Sans", sans-serif; overflow: hidden; }
.defs { position: absolute; }
h1, h2, h3, p, ul { margin: 0; padding: 0; }
ul { list-style: none; }
i { display: inline-block; font-style: normal; }
mark { color: #16191f; }

.screen { position: relative; width: 1919px; height: 1079px; display: flex; flex-direction: column; background: #3b3b3b; overflow: hidden; }

/* browser tab strip */
.tabstrip { height: 32px; flex: none; background: #1f1f1f; display: flex; align-items: center; color: #f2f2f2; font-size: 11.300px; }
.profile { width: 73px; height: 28px; margin-left: 8px; border: 1px solid #d8d8d8; border-radius: 14px; display: flex; align-items: center; gap: 5px; }
.avatar { width: 24px; height: 24px; margin-left: 1px; border-radius: 50%; background: linear-gradient(#2c6fa8 0 40%, #79b7d8 40% 60%, #2a5a80 60%); }
.strip-icon { width: 26px; display: flex; justify-content: center; margin-left: 0; }
.profile + .strip-icon { margin-left: 14px; }
.strip-icon + .strip-icon { margin-left: 16px; }
.tab-sep { width: 1px; height: 20px; background: #5c5c5c; flex: none; }
.tab-sep.first { margin-left: 10px; }
.tab { width: 238.700px; height: 32px; flex: none; display: flex; align-items: center; padding-left: 12px; position: relative; }
.tab.active { background: #3b3b3b; border-radius: 8px 8px 0 0; }
.favicon { width: 16px; height: 16px; flex: none; margin-right: 8px; display: flex; align-items: center; justify-content: center; }
.favicon.pink { background: #e0246e; border-radius: 2px; }
.tab-title { width: 172px; flex: none; white-space: nowrap; font-size: 11.300px; -webkit-mask-image: linear-gradient(90deg, #000 92%, transparent); mask-image: linear-gradient(90deg, #000 92%, transparent); }
.tab-x { width: 10px; height: 10px; margin-left: 10px; color: #e8e8e8; }
.new-tab { width: 14px; height: 14px; margin-left: 10px; }
.win-controls { margin-left: auto; display: flex; gap: 36px; padding-right: 16px; }
.win-controls svg { width: 10px; height: 10px; }

/* toolbar */
.toolbar { height: 42px; flex: none; display: flex; align-items: flex-end; padding-left: 6px; }
.tool { width: 44px; height: 38px; flex: none; display: flex; align-items: center; justify-content: center; }
.tool.first-end { margin-left: 5px; }
.address { width: 1553px; height: 38px; background: #2b2b2b; border-radius: 19px; margin-left: 6px; display: flex; align-items: center; padding-left: 19px; flex: none; }
.url { font-size: 13.370px; margin-left: 18px; color: #f2f2f2; white-space: nowrap; }
.url-dim { color: #9a9a9a; }
.address-end { margin-left: auto; display: flex; align-items: center; padding-right: 6px; }
.addr-btn { width: 40px; height: 36px; display: flex; align-items: center; justify-content: center; }
.addr-btn.on { width: 38px; height: 38px; border-radius: 50%; background: #4a4a4a; margin-right: 3px; }

/* bookmarks */
.bookmarks { height: 38px; flex: none; display: grid; grid-template-columns: 68px 78px 151px 154px 113px 150px 149px 153px 94px 147px 380px 31px 200px; padding-left: 13px; align-items: center; color: #f2f2f2; font-size: 11.600px; }
.bm { display: flex; align-items: center; gap: 8px; white-space: nowrap; }
.bm-icon { width: 16px; height: 16px; flex: none; }
.letter { display: flex; align-items: center; justify-content: center; font-size: 10px; font-weight: 700; color: #fff; border-radius: 3px; }
.teal { background: #0f7c80; border-radius: 50%; }
.blue { background: #0f6cbd; }
.violet { background: #5b3fd6; border-radius: 50%; }
.green { background: #107c41; }

.find { position: absolute; left: 1286px; top: 73px; width: 367px; height: 51px; background: #4a4a4a; border: 1px solid #5f5f5f; border-radius: 8px; box-shadow: 0 2px 6px rgba(0,0,0,.35); display: flex; align-items: center; font-size: 11.600px; color: #f2f2f2; padding-left: 8px; z-index: 5; }
.find-text { width: 178px; }
.find-count { color: #c8c8c8; width: 33px; }
.find-sep { width: 1px; height: 31px; background: #666; margin-right: 18px; }
.find svg { margin-right: 18px; }

/* workspace */
.workspace { height: 920px; flex: none; display: flex; }
.console { width: 1872px; margin-left: 4px; height: 916px; display: flex; flex-direction: column; background: #fff; border-radius: 8px; overflow: hidden; }

.topnav { height: 32px; flex: none; background: #232f3e; display: flex; align-items: center; color: #fff; font-size: 10.400px; }
.aws-logo { width: 30px; margin-left: 15px; display: flex; flex-direction: column; align-items: center; line-height: 1; font-size: 14px; font-weight: 500; }
.aws-logo span { height: 13px; line-height: 11px; }
.aws-logo svg { margin-top: -1px; }
.nav-rule { width: 1px; height: 17px; background: #414d5c; margin-left: 8px; }
.grid-icon { margin-left: 14px; }
.services { margin-left: 6px; width: 50px; white-space: nowrap; font-size: 9.600px; }
.hit-current { background: #ff9632; padding: 2px 0; }
.global-search { width: 430px; height: 23px; background: #16191f; border: 1px solid #879596; border-radius: 2px; display: flex; align-items: center; padding: 0 8px 0 9px; color: #d5dbdb; font-size: 10.400px; }
.search-ph { font-style: italic; margin-left: 8px; color: #aab7b8; }
.search-key { margin-left: auto; color: #aab7b8; }
.search-glass { color: #d5dbdb; }
.topnav-right { margin-left: auto; display: flex; align-items: center; padding-right: 14px; }
.top-ico { width: 41px; height: 15px; display: flex; align-items: center; justify-content: center; border-right: 1px solid #414d5c; }
.dark-gear { color: #fff; --gear-bg: #232f3e; }
.q-mark { font-size: 9px; font-weight: 700; fill: #fff; text-anchor: middle; }
.region { width: 86px; padding-left: 14px; border-right: 1px solid #414d5c; height: 15px; line-height: 15px; white-space: nowrap; font-size: 9.800px; }
.account { width: 337px; flex: none; padding-left: 14px; white-space: nowrap; font-size: 9.600px; letter-spacing: -.08px; }
.caret { width: 0; height: 0; border-left: 3.500px solid transparent; border-right: 3.500px solid transparent; border-top: 6px solid #fff; }
.region .caret { margin-left: 2px; }
.caret.end { margin-left: 4px; }

.console-body { flex: 1; min-height: 0; display: flex; border-top: 2px solid #aab7b8; }

/* left navigation */
.sidenav { width: 201px; flex: none; background: #fff; border-right: 1px solid #d5dbdb; color: #545b64; font-size: 10.900px; }
.side-head { height: 44px; display: flex; align-items: center; padding-left: 22px; border-bottom: 1px solid #eaeded; padding-bottom: 3px; }
.side-head h2 { font-size: 14.400px; font-weight: 700; color: #16191f; }
.side-x { margin-left: auto; margin-right: 18px; margin-top: 5px; }
.favorites { height: 30px; background: #fafafa; border-bottom: 1px solid #eaeded; display: flex; align-items: center; justify-content: space-between; padding: 0 14px 0 24px; font-size: 10.800px; }
.side-list { padding-top: 7px; border-bottom: 1px solid #eaeded; margin-left: 4px; padding-bottom: 6px; }
.item { height: 25.600px; display: flex; align-items: center; gap: 4px; padding-left: 22px; white-space: nowrap; }
.item.current { color: #ec7211; font-weight: 700; font-size: 10.700px; }
.new { color: #0073bb; border-bottom: 1px dashed #0073bb; line-height: 13px; font-weight: 400; }
.head { height: 25.600px; display: flex; align-items: center; gap: 4px; padding-left: 8px; font-weight: 700; font-size: 10.700px; white-space: nowrap; }
.head .tri-down { margin-right: 3px; }
.head .tri-right { margin-right: 4px; }
.head.alarms { margin-top: 5px; }
.head.group { margin-top: 12.400px; }
.head.tight { margin-top: 3.800px; }
.alarm-badges { display: flex; align-items: center; gap: 3px; margin-left: 1px; font-size: 9.600px; }
.alarm-badges b { margin-right: 4px; font-weight: 500; }
.tri-down { width: 0; height: 0; border-left: 4px solid transparent; border-right: 4px solid transparent; border-top: 7px solid #879596; }
.tri-right { width: 0; height: 0; border-top: 4px solid transparent; border-bottom: 4px solid transparent; border-left: 6.500px solid #879596; }
.tri-down.dark { border-top-color: #545b64; }
.tri-right.dark { border-left-color: #545b64; }
.side-foot { padding: 7px 0 0 25px; }
.side-foot li { height: 21.500px; display: flex; align-items: center; gap: 4px; }
.side-foot li:first-child { height: 23px; }

/* main */
.main { flex: 1; min-width: 0; display: flex; flex-direction: column; background: #f2f3f3; --gear-bg: #fff; }
.banner { height: 39px; flex: none; background: #0073bb; color: #fff; display: flex; align-items: center; padding: 0 15px 2px 8px; font-size: 10.440px; font-weight: 600; }
.banner-icon { margin-right: 6px; }
.banner a { text-decoration: underline; }
.banner-x { margin-left: auto; }
.page-head { height: 83px; flex: none; background: #fafafa; border-bottom: 1px solid #aab7b8; padding: 0 24px 0 19px; }
.crumbs { height: 37px; display: flex; align-items: center; gap: 8px; font-size: 10.700px; color: #545b64; }
.crumbs a { color: #0073bb; text-decoration: underline; }
.crumbs svg { margin: 0 2px; }
.updated { margin-left: auto; margin-right: -4px; font-size: 9px; color: #687078; }
.title-row { height: 45px; display: flex; align-items: center; padding-bottom: 2px; }
.title-row h1 { font-size: 13.700px; font-weight: 700; color: #16191f; margin-right: auto; margin-bottom: 4px; }
.range { width: 317px; height: 24px; background: #fff; border: 1px solid #aab7b8; display: flex; align-items: center; font-size: 11.200px; color: #545b64; }
.range-opt { width: 38px; text-align: center; }
.range-opt.on { width: 39px; color: #0073bb; font-weight: 700; }
.range-opt.w15 { width: 47px; }
.range-opt.w30 { width: 44px; }
.range-opt.w1 { width: 38px; }
.range-opt.w3 { width: 32px; }
.range-opt.w6 { width: 37px; }
.range-custom { flex: 1; height: 100%; border-left: 1px solid #eaeded; display: flex; align-items: center; gap: 8px; padding-left: 10px; }
.btn-group { display: flex; margin-left: 8px; height: 25px; }
.sq { height: 25px; display: flex; align-items: center; justify-content: center; background: #fff; border: 1px solid #545b64; }
.btn-group .sq + .sq { border-left: 0; }
.w38 { width: 38px; }
.w34 { width: 34px; }
.w39 { width: 39px; }
.sq.single { margin-left: 8px; color: #545b64; }
.view-switch { display: flex; height: 26px; margin-left: 8px; margin-top: -2px; font-size: 11.200px; font-weight: 700; border: 1px solid #232f3e; }
.view-on { width: 85px; display: flex; align-items: center; justify-content: center; background: #0073bb; color: #fff; padding-bottom: 2px; }
.view-off { width: 83px; display: flex; align-items: center; justify-content: center; background: #fff; color: #545b64; padding-bottom: 2px; }

/* service map */
.map { flex: 1; min-height: 0; position: relative; padding: 18px 30px 0 25px; display: flex; flex-direction: column; align-items: flex-end; }
.map-canvas { position: absolute; inset: 0; width: 100%; height: 100%; }
.map-tools { position: relative; width: 100%; display: flex; align-items: center; }
.field { width: 439px; height: 24px; background: #fff; border: 1px solid #545b64; display: flex; align-items: center; gap: 7px; padding-left: 7px; font-size: 11.200px; font-style: italic; color: #687078; }
.field svg { color: #545b64; }
.sq.plus { width: 39px; margin: 0 9px; }
.ghost-btn { height: 25px; display: inline-flex; align-items: center; justify-content: center; gap: 6px; background: #fafafa; border: 1px solid #d5dbdb; color: #aab7b8; font-size: 11.200px; font-weight: 700; white-space: nowrap; }
.conn { width: 129px; margin-left: auto; background: #f6f7f7; }
.zoomers { margin-left: 9px; }
.zoomers .sq { width: 40px; }
.zoomers .sq:first-child { width: 39px; }
.zoomers .sq:last-child { width: 39px; }
.dot { width: 6px; height: 6px; border-radius: 50%; background: #545b64; }
.sq.gear { width: 40px; }
.legend { position: relative; width: 220px; height: 28px; margin-top: 22px; background: #fff; border: 1px solid #d5dbdb; display: flex; align-items: center; padding-left: 14px; gap: 8px; font-size: 10.800px; font-weight: 700; color: #545b64; }

.edges path { stroke: #879196; stroke-width: 1; fill: none; marker-end: url(#arrow); }
.nodes circle { fill: #fff; stroke: #687078; stroke-width: 1; }
.health-arc { fill: none; stroke: #a5771a; stroke-width: 3; }
.glyph-fill { fill: #687078; }
.gw-dash { fill: none; stroke: #687078; stroke-width: 1.500; stroke-dasharray: 3 2.500; }
.gw-code { fill: none; stroke: #687078; stroke-width: 1.500; }
.labels text { font-size: 9.500px; font-family: "Noto Sans", sans-serif; }
.labels .name { font-size: 9.800px; font-weight: 600; fill: #16191f; }
.labels .type { fill: #545b64; text-anchor: middle; }
.labels .status { fill: none; stroke: #545b64; stroke-width: 1; }

/* details */
.details { height: 70px; flex: none; background: #fafafa; border-top: 1px solid #eaeded; border-bottom: 1px solid #eaeded; display: flex; justify-content: space-between; padding: 8px 16px 0 15px; }
.details h3 { font-size: 13.600px; font-weight: 700; color: #16191f; line-height: 20px; margin-top: 2px; }
.details p { font-size: 11px; color: #545b64; margin-top: 6px; }
.details-actions { display: flex; gap: 7px; }
.details-actions .ghost-btn:nth-child(1) { width: 103px; }
.details-actions .ghost-btn:nth-child(2) { width: 96px; }
.details-actions .ghost-btn:nth-child(3) { width: 128px; }
.details-actions .ghost-btn:nth-child(4) { width: 121px; }

.console-foot { height: 25px; flex: none; background: #232f3e; color: #fff; display: flex; align-items: center; font-size: 9.400px; padding: 0 13px 1px 13px; }
.cs { margin: 0 19px 0 4px; }
.foot-right { margin-left: auto; display: flex; align-items: center; gap: 23px; }
.hit { background: #ffff33; }

/* edge side bar */
.edgebar { width: 43px; flex: none; display: flex; flex-direction: column; align-items: center; margin-top: -21px; color: #e8e8e8; --gear-bg: #3b3b3b; }
.edgebar svg { flex: none; margin-bottom: 22px; }
.edge-rule { width: 22px; height: 1px; background: #6a6a6a; margin: 0 0 27px; flex: none; }
.edge-rule.low { margin: 512px 0 22px; }
.edgebar .edge-panel { margin-bottom: 26px; }

/* windows task bar */
.taskbar { flex: 1; background: linear-gradient(90deg, #2a2212, #27240f); display: flex; align-items: center; position: relative; }
.task-icons { display: flex; margin-left: 652px; }
.task { width: 44px; height: 47px; display: flex; align-items: center; justify-content: center; position: relative; }
.task.active { background: rgba(255,255,255,.06); width: 40px; height: 40px; margin: 0 2px; border-radius: 4px; }
.pip { position: absolute; left: 19px; bottom: 3px; width: 6px; height: 3px; border-radius: 1px; background: #9a9a9a; }
.pip.blue { left: 12px; bottom: 0; width: 16px; background: #47c4f5; }
.briefcase { position: absolute; left: 8px; bottom: 6px; }
.type-t { width: 23px; height: 24px; background: #f6f6f6; border-radius: 5px; color: #2b2b2b; font-family: "Liberation Serif", serif; font-size: 18px; font-weight: 700; display: flex; align-items: center; justify-content: center; }
.tray { margin-left: auto; display: flex; align-items: center; color: #f5f5f5; padding-right: 19px; }
.tray-v { width: 15px; height: 15px; background: #f2dede; color: #c43b3b; border: 1px solid #c43b3b; font-size: 11px; font-weight: 700; display: flex; align-items: center; justify-content: center; margin: 0 16px 0 19px; }
.tray svg + svg { margin-left: 8px; }
.clock { display: flex; flex-direction: column; align-items: flex-end; font-size: 11.700px; line-height: 16px; margin-left: 18px; }
.tray-bell { margin-left: 8px; }
```
